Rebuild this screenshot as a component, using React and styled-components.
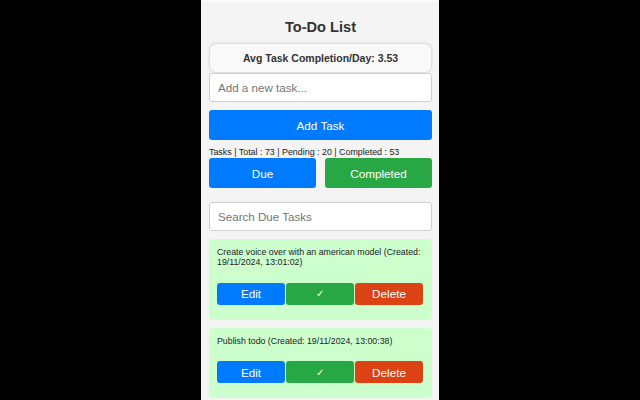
import React from "react";
import styled, { createGlobalStyle } from "styled-components";

const Global = createGlobalStyle`
  html, body { margin: 0; padding: 0; background: #000; height: 100%; overflow: hidden; }
  body { font-family: "Liberation Sans", Arial, sans-serif; }
  * { box-sizing: border-box; }
`;

const Page = styled.div`
  display: flex;
  justify-content: center;
  height: 400px;
`;

const Panel = styled.div`
  width: 238px;
  background: #f4f4f4;
  border-top: 2px solid #fafafa;
  padding: 0 7px 0 8px;
  display: flex;
  flex-direction: column;
  overflow: hidden;
  & > * { flex-shrink: 0; }
`;

const Title = styled.h1`
  margin: 17px 0 8px;
  font-size: 14.6px;
  line-height: 17px;
  font-weight: bold;
  text-align: center;
  color: #333;
`;

const AvgBox = styled.div`
  margin: 0 1px;
  height: 28px;
  border-radius: 6px;
  background: #f9f9f9;
  box-shadow: 0 0 3px rgba(0, 0, 0, 0.25);
  display: flex;
  align-items: center;
  justify-content: center;
  font-size: 10.5px;
  font-weight: bold;
  color: #333;
`;

const Input = styled.input`
  display: block;
  width: 100%;
  height: 29px;
  margin-top: ${(p) => p.$top || 0}px;
  padding: 0 8px;
  border: 1px solid #cfcfcf;
  border-radius: 3px;
  background: #fff;
  font-family: inherit;
  font-size: 11.6px;
  color: #333;
  outline: none;
  &::placeholder { color: #757575; }
`;

const Button = styled.button`
  display: flex;
  align-items: center;
  justify-content: center;
  border: none;
  border-radius: 3px;
  background: ${(p) => p.$bg};
  color: #fff;
  font-family: inherit;
  font-size: ${(p) => p.$size || 11.7}px;
  height: ${(p) => p.$h || 30}px;
  padding: 0;
  cursor: pointer;
`;

const WideButton = styled(Button)`
  width: 100%;
  margin-top: 8px;
`;

const Stats = styled.div`
  margin-top: 7px;
  font-size: 8.9px;
  line-height: 10px;
  color: #222;
`;

const Tabs = styled.div`
  display: grid;
  grid-template-columns: 1fr 1fr;
  gap: 9px;
  margin-top: 1px;
`;

const Card = styled.div`
  margin-top: 8px;
  background: #ccffcc;
  border-radius: 4px;
  padding: 8px 9px 15px 8px;
`;

const CardText = styled.div`
  font-size: 8.8px;
  line-height: 10.4px;
  color: #222;
`;

const Actions = styled.div`
  display: grid;
  grid-template-columns: 1fr 1fr 1fr;
  gap: 1px;
  margin-top: 15px;
`;

const tasks = [
  "Create voice over with an american model (Created: 19/11/2024, 13:01:02)",
  "Publish todo (Created: 19/11/2024, 13:00:38)",
];

export default function App() {
  return (
    <>
      <Global />
      <Page>
        <Panel>
          <Title>To-Do List</Title>
          <AvgBox>Avg Task Completion/Day: 3.53</AvgBox>
          <Input $top={1} placeholder="Add a new task..." />
          <WideButton $bg="#007bff">Add Task</WideButton>
          <Stats>Tasks | Total : 73 | Pending : 20 | Completed : 53</Stats>
          <Tabs>
            <Button $bg="#007bff">Due</Button>
            <Button $bg="#28a745">Completed</Button>
          </Tabs>
          <Input $top={14} placeholder="Search Due Tasks" />
          {tasks.map((t, i) => (
            <Card key={i}>
              <CardText>{t}</CardText>
              <Actions>
                <Button $bg="#007bff" $h={22}>Edit</Button>
                <Button $bg="#28a745" $h={22} $size={10}>✓</Button>
                <Button $bg="#dc4314" $h={22}>Delete</Button>
              </Actions>
            </Card>
          ))}
        </Panel>
      </Page>
    </>
  );
}
